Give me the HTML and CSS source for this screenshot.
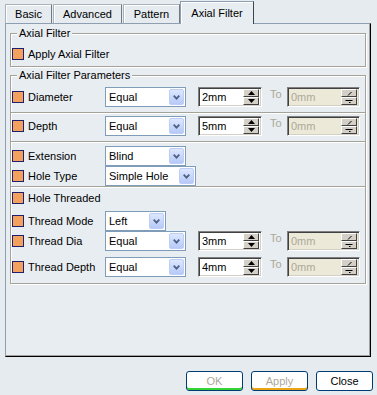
FILE: index.html
```html
<!DOCTYPE html>
<html lang="en">
<head>
<meta charset="UTF-8">
<title>Axial Filter</title>
<link rel="stylesheet" href="styles.css">
</head>
<body>
<div class="tabs">
  <div class="tab t-basic">Basic</div>
  <div class="tab t-adv">Advanced</div>
  <div class="tab t-pat">Pattern</div>
  <div class="tab active">Axial Filter</div>
</div>
<div class="panel">
  <div class="group g1">
    <div class="legend">Axial Filter</div>
    <div class="row one"><span class="chk"></span><span>Apply Axial Filter</span></div>
  </div>
  <div class="group g2">
    <div class="legend">Axial Filter Parameters</div>

    <div class="row r-diam">
      <span class="chk"></span><span class="lbl">Diameter</span>
      <div class="combo w81"><span class="val">Equal</span><span class="drop"><svg width="7" height="5" viewBox="0 0 7 5"><polyline points="0.7,0.7 3.5,3.6 6.3,0.7" fill="none" stroke="#4d6185" stroke-width="1.8"/></svg></span></div>
      <div class="spin"><span class="val">2mm</span><span class="sbtns"><span class="sb"><svg width="7" height="4" viewBox="0 0 7 4"><polygon points="0,4 3.5,0 7,4"/></svg></span><span class="sb"><svg width="7" height="4" viewBox="0 0 7 4"><polygon points="0,0 3.5,4 7,0"/></svg></span></span></div>
      <span class="to">To</span>
      <div class="spin off"><span class="val">0mm</span><span class="sbtns"><span class="sb"><svg width="8" height="5" viewBox="0 0 8 5"><line x1="3" y1="4.5" x2="6.5" y2="1" stroke="#000"/></svg></span><span class="sb"><svg width="8" height="5" viewBox="0 0 8 5"><line x1="0.5" y1="1.5" x2="7.5" y2="1.5" stroke="#000"/><line x1="4" y1="3.5" x2="5.5" y2="3.5" stroke="#000"/></svg></span></span></div>
    </div>
    <div class="sep s1"></div>

    <div class="row r-depth">
      <span class="chk"></span><span class="lbl">Depth</span>
      <div class="combo w81"><span class="val">Equal</span><span class="drop"><svg width="7" height="5" viewBox="0 0 7 5"><polyline points="0.7,0.7 3.5,3.6 6.3,0.7" fill="none" stroke="#4d6185" stroke-width="1.8"/></svg></span></div>
      <div class="spin"><span class="val">5mm</span><span class="sbtns"><span class="sb"><svg width="7" height="4" viewBox="0 0 7 4"><polygon points="0,4 3.5,0 7,4"/></svg></span><span class="sb"><svg width="7" height="4" viewBox="0 0 7 4"><polygon points="0,0 3.5,4 7,0"/></svg></span></span></div>
      <span class="to">To</span>
      <div class="spin off"><span class="val">0mm</span><span class="sbtns"><span class="sb"><svg width="8" height="5" viewBox="0 0 8 5"><line x1="3" y1="4.5" x2="6.5" y2="1" stroke="#000"/></svg></span><span class="sb"><svg width="8" height="5" viewBox="0 0 8 5"><line x1="0.5" y1="1.5" x2="7.5" y2="1.5" stroke="#000"/><line x1="4" y1="3.5" x2="5.5" y2="3.5" stroke="#000"/></svg></span></span></div>
    </div>
    <div class="sep s2"></div>

    <div class="row r-ext">
      <span class="chk"></span><span class="lbl">Extension</span>
      <div class="combo w81"><span class="val">Blind</span><span class="drop"><svg width="7" height="5" viewBox="0 0 7 5"><polyline points="0.7,0.7 3.5,3.6 6.3,0.7" fill="none" stroke="#4d6185" stroke-width="1.8"/></svg></span></div>
    </div>
    <div class="row">
      <span class="chk"></span><span class="lbl">Hole Type</span>
      <div class="combo w91"><span class="val">Simple Hole</span><span class="drop"><svg width="7" height="5" viewBox="0 0 7 5"><polyline points="0.7,0.7 3.5,3.6 6.3,0.7" fill="none" stroke="#4d6185" stroke-width="1.8"/></svg></span></div>
    </div>
    <div class="sep"></div>

    <div class="row">
      <span class="chk"></span><span class="lbl">Hole Threaded</span>
    </div>
    <div class="row r-mode">
      <span class="chk"></span><span class="lbl">Thread Mode</span>
      <div class="combo w61"><span class="val">Left</span><span class="drop"><svg width="7" height="5" viewBox="0 0 7 5"><polyline points="0.7,0.7 3.5,3.6 6.3,0.7" fill="none" stroke="#4d6185" stroke-width="1.8"/></svg></span></div>
    </div>
    <div class="row">
      <span class="chk"></span><span class="lbl">Thread Dia</span>
      <div class="combo w81"><span class="val">Equal</span><span class="drop"><svg width="7" height="5" viewBox="0 0 7 5"><polyline points="0.7,0.7 3.5,3.6 6.3,0.7" fill="none" stroke="#4d6185" stroke-width="1.8"/></svg></span></div>
      <div class="spin"><span class="val">3mm</span><span class="sbtns"><span class="sb"><svg width="7" height="4" viewBox="0 0 7 4"><polygon points="0,4 3.5,0 7,4"/></svg></span><span class="sb"><svg width="7" height="4" viewBox="0 0 7 4"><polygon points="0,0 3.5,4 7,0"/></svg></span></span></div>
      <span class="to">To</span>
      <div class="spin off"><span class="val">0mm</span><span class="sbtns"><span class="sb"><svg width="8" height="5" viewBox="0 0 8 5"><line x1="3" y1="4.5" x2="6.5" y2="1" stroke="#000"/></svg></span><span class="sb"><svg width="8" height="5" viewBox="0 0 8 5"><line x1="0.5" y1="1.5" x2="7.5" y2="1.5" stroke="#000"/><line x1="4" y1="3.5" x2="5.5" y2="3.5" stroke="#000"/></svg></span></span></div>
    </div>
    <div class="row r-tdepth">
      <span class="chk"></span><span class="lbl">Thread Depth</span>
      <div class="combo w81"><span class="val">Equal</span><span class="drop"><svg width="7" height="5" viewBox="0 0 7 5"><polyline points="0.7,0.7 3.5,3.6 6.3,0.7" fill="none" stroke="#4d6185" stroke-width="1.8"/></svg></span></div>
      <div class="spin"><span class="val">4mm</span><span class="sbtns"><span class="sb"><svg width="7" height="4" viewBox="0 0 7 4"><polygon points="0,4 3.5,0 7,4"/></svg></span><span class="sb"><svg width="7" height="4" viewBox="0 0 7 4"><polygon points="0,0 3.5,4 7,0"/></svg></span></span></div>
      <span class="to">To</span>
      <div class="spin off"><span class="val">0mm</span><span class="sbtns"><span class="sb"><svg width="8" height="5" viewBox="0 0 8 5"><line x1="3" y1="4.5" x2="6.5" y2="1" stroke="#000"/></svg></span><span class="sb"><svg width="8" height="5" viewBox="0 0 8 5"><line x1="0.5" y1="1.5" x2="7.5" y2="1.5" stroke="#000"/><line x1="4" y1="3.5" x2="5.5" y2="3.5" stroke="#000"/></svg></span></span></div>
    </div>
  </div>
</div>
<div class="actions">
  <div class="btn off ok">OK</div>
  <div class="btn off apply">Apply</div>
  <div class="btn">Close</div>
</div>
</body>
</html>
```

FILE: styles.css
```css
body {
  margin: 0;
  width: 377px;
  height: 395px;
  overflow: hidden;
  background: #e5ebef;
  color: #000;
  font: 11px "Liberation Sans", Arial, sans-serif;
}

/* tab strip */
.tabs {
  display: flex;
  align-items: flex-end;
  height: 23px;
  padding-left: 5px;
}
.tab {
  height: 19px;
  box-sizing: border-box;
  border: 1px solid #a7b2bc;
  border-bottom: none;
  border-right-color: #6f7a85;
  box-shadow: inset 1px 1px 0 #fff;
  display: flex;
  align-items: center;
  justify-content: center;
  background: #e5ebef;
}
.t-basic { width: 47px; margin-right: 1px; }
.t-adv { width: 69px; margin-right: 1px; }
.t-pat { width: 57px; }
.tab.active {
  width: 74px;
  height: 23px;
  margin-bottom: -1px;
  padding-bottom: 1px;
  position: relative;
  z-index: 1;
  background: #e8edf1;
  border-color: #8d9fb0;
  border-right-color: #3c4650;
}

/* page body */
.panel {
  margin-left: 5px;
  width: 366px;
  height: 334px;
  box-sizing: border-box;
  border: 1px solid;
  border-color: #8d9fb0 #000 #000 #8d9fb0;
  box-shadow: inset -1px -1px 0 #a0a0a0;
  background: #e8edf1;
  padding: 9px 0 0 4px;
}

.group {
  width: 356px;
  box-sizing: border-box;
  border: 1px solid #a3a39a;
  box-shadow: inset 1px 1px 0 #fff, 1px 1px 0 #fff;
}
.g1 { padding-bottom: 6px; }
.g2 { margin-top: 8px; padding-bottom: 6px; }

.legend {
  margin: -7px 0 0 6px;
  padding: 0 2px;
  width: max-content;
  line-height: 13px;
  background: #e8edf1;
}

.row {
  display: flex;
  align-items: center;
  height: 20px;
  padding-left: 1px;
}
.row.one { height: 12px; margin-top: 8px; }
.r-diam { margin-top: 5px; }
.r-depth { margin-top: 2px; }
.r-ext { margin-top: 3px; }
.r-mode { margin-top: 3px; }
.r-tdepth { margin-top: 6px; }

.sep {
  border-top: 1px solid #a3a39a;
  border-bottom: 1px solid #fff;
}
.s1, .s2 { margin-top: 5px; }

.chk {
  flex: none;
  width: 12px;
  height: 12px;
  box-sizing: border-box;
  margin-right: 4px;
  border: 1px solid #1f1f6f;
  background: #f4a15d;
}
.lbl { width: 77px; flex: none; }

/* combo box */
.combo {
  flex: none;
  height: 20px;
  box-sizing: border-box;
  padding: 1px;
  border: 1px solid #7f9db9;
  background: #fff;
  display: flex;
  align-items: center;
}
.w81 { width: 81px; }
.w91 { width: 91px; }
.w61 { width: 61px; }
.combo .val { flex: 1; padding-left: 2px; white-space: nowrap; }
.drop {
  width: 15px;
  height: 16px;
  box-sizing: border-box;
  border: 1px solid #bccdf9;
  border-radius: 2px;
  background: linear-gradient(#dde7fe, #b6c9f7);
  display: flex;
  align-items: center;
  justify-content: center;
}

/* spinner */
.spin {
  flex: none;
  width: 64px;
  height: 20px;
  margin-left: 12px;
  box-sizing: border-box;
  padding: 2px;
  border: 1px solid;
  border-color: #808080 #fff #fff #808080;
  box-shadow: inset 1px 1px 0 #404040, inset -1px -1px 0 #d4d0c8;
  background: #fff;
  display: flex;
  align-items: center;
}
.spin .val { flex: 1; padding-left: 1px; }
.spin.off {
  width: 73px;
  margin-left: 0;
  background: #ece9d8;
  color: #aca899;
}
.sbtns {
  width: 16px;
  height: 16px;
  display: flex;
  flex-direction: column;
}
.sb {
  flex: 1;
  box-sizing: border-box;
  border: 1px solid;
  border-color: #fff #404040 #404040 #fff;
  background: #d4d0c8;
  display: flex;
  align-items: center;
  justify-content: center;
}
.to {
  width: 17px;
  margin: 1px 0 0 8px;
  align-self: flex-start;
  line-height: 13px;
  color: #aca899;
}

/* dialog buttons */
.actions {
  display: flex;
  justify-content: flex-end;
  gap: 8px;
  padding: 14px 4px 0 0;
}
.btn {
  width: 57px;
  height: 20px;
  box-sizing: border-box;
  border: 1px solid #003c74;
  border-radius: 3px;
  background: #fff;
  display: flex;
  align-items: center;
  justify-content: center;
}
.btn.off { color: #aca899; }
.btn.ok { box-shadow: inset 0 -2px 0 #35d435; }
.btn.apply { box-shadow: inset 0 -2px 0 #eaa516; }
```
